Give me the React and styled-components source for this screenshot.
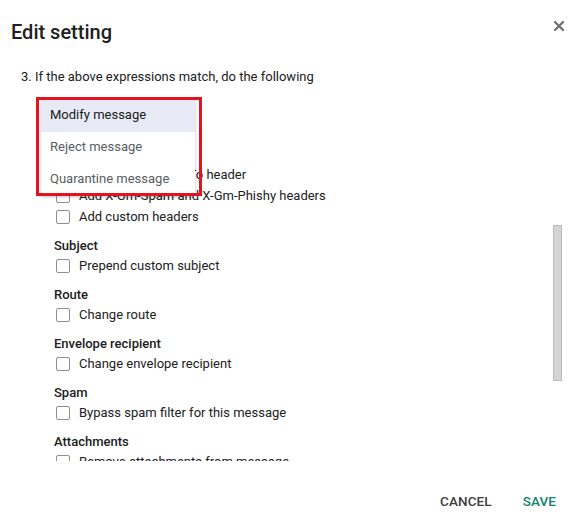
import styled, { createGlobalStyle } from "styled-components";

const GlobalStyle = createGlobalStyle`
  body {
    margin: 0;
    background: #fff;
    font-family: Roboto, "Liberation Sans", Arial, sans-serif;
    color: #212121;
  }
  * { box-sizing: border-box; }
`;

const Dialog = styled.div`
  width: 576px;
  height: 520px;
  display: flex;
  flex-direction: column;
  background: #fff;
`;

const Header = styled.div`
  display: flex;
  justify-content: space-between;
  align-items: flex-start;
  height: 61px;
  padding: 20px 11px 0 11px;
`;

const Title = styled.h2`
  margin: 0;
  font-size: 20px;
  line-height: 24px;
  font-weight: 500;
  color: #202020;
`;

const CloseButton = styled.button`
  border: 0;
  background: none;
  padding: 0;
  margin-top: 1px;
  margin-right: 1px;
  width: 10px;
  height: 10px;
  cursor: pointer;
  display: flex;
`;

const Body = styled.div`
  flex: 1;
  position: relative;
  overflow: hidden;
  padding: 6px 0 0 21px;
`;

const StepText = styled.p`
  margin: 0;
  font-size: 13px;
  line-height: 20px;
  color: #212121;
`;

const SelectField = styled.div`
  position: relative;
  margin: 9px 0 0 33px;
  width: 140px;
  height: 40px;
  border-bottom: 1px solid #9e9e9e;
`;

const Menu = styled.ul`
  position: absolute;
  left: -13px;
  top: 4px;
  width: 154px;
  margin: 0;
  padding: 0;
  list-style: none;
  background: #fff;
  box-shadow: 0 1px 3px rgba(0, 0, 0, 0.25);
  z-index: 2;
`;

const MenuItem = styled.li`
  height: 32px;
  line-height: 29px;
  padding-left: 9px;
  font-size: 13px;
  color: ${({ $active }) => ($active ? "#202020" : "#585c60")};
  background: ${({ $active }) => ($active ? "#e8eaf6" : "#fff")};
`;

const Highlight = styled.div`
  position: absolute;
  left: -18px;
  top: 1px;
  width: 166px;
  height: 99px;
  border: 3px solid #e3141f;
  z-index: 3;
  pointer-events: none;
`;

const Group = styled.div`
  margin: 9px 0 0 33px;
`;

const GroupLabel = styled.div`
  height: 19px;
  line-height: 19px;
  font-size: 13px;
  font-weight: 500;
  color: #202020;
`;

const Option = styled.label`
  display: flex;
  align-items: center;
  gap: 9px;
  height: 21px;
  margin-left: 2px;
  font-size: 13px;
  color: #212121;
`;

const Box = styled.span`
  width: 14px;
  height: 14px;
  border: 1.5px solid #8f8f8f;
  border-radius: 2px;
  background: #fff;
  flex: none;
`;

const ScrollThumb = styled.div`
  position: absolute;
  right: 14px;
  top: 164px;
  width: 9px;
  height: 156px;
  background: #d4d4d4;
  border: 1px solid #bcbcbc;
`;

const Footer = styled.div`
  height: 59px;
  display: flex;
  justify-content: flex-end;
  align-items: center;
  gap: 15px;
  padding: 20px 12px 0 0;
`;

const TextButton = styled.button`
  border: 0;
  background: none;
  padding: 0 8px;
  height: 36px;
  font-family: Roboto, "Liberation Sans", Arial, sans-serif;
  font-size: 13.5px;
  font-weight: 500;
  letter-spacing: 0.1px;
  color: ${({ $primary }) => ($primary ? "#13826c" : "#3c3c3c")};
  cursor: pointer;
`;

const groups = [
  {
    label: "Headers",
    options: [
      "Add X-Gm-Original-To header",
      "Add X-Gm-Spam and X-Gm-Phishy headers",
      "Add custom headers",
    ],
  },
  { label: "Subject", options: ["Prepend custom subject"] },
  { label: "Route", options: ["Change route"] },
  { label: "Envelope recipient", options: ["Change envelope recipient"] },
  { label: "Spam", options: ["Bypass spam filter for this message"] },
  { label: "Attachments", options: ["Remove attachments from message"] },
];

const menuItems = ["Modify message", "Reject message", "Quarantine message"];

export default function App() {
  return (
    <>
      <GlobalStyle />
      <Dialog>
        <Header>
          <Title>Edit setting</Title>
          <CloseButton aria-label="Close">
            <svg width="10" height="10" viewBox="0 0 10 10">
              <path
                d="M1 1 L9 9 M9 1 L1 9"
                stroke="#6d6d6d"
                strokeWidth="2.2"
                strokeLinecap="square"
              />
            </svg>
          </CloseButton>
        </Header>

        <Body>
          <StepText>3. If the above expressions match, do the following</StepText>

          <SelectField>
            <Menu>
              {menuItems.map((item, i) => (
                <MenuItem key={item} $active={i === 0}>
                  {item}
                </MenuItem>
              ))}
            </Menu>
            <Highlight />
          </SelectField>

          {groups.map((group) => (
            <Group key={group.label}>
              <GroupLabel>{group.label}</GroupLabel>
              {group.options.map((opt) => (
                <Option key={opt}>
                  <Box />
                  {opt}
                </Option>
              ))}
            </Group>
          ))}

          <ScrollThumb />
        </Body>

        <Footer>
          <TextButton>CANCEL</TextButton>
          <TextButton $primary>SAVE</TextButton>
        </Footer>
      </Dialog>
    </>
  );
}
